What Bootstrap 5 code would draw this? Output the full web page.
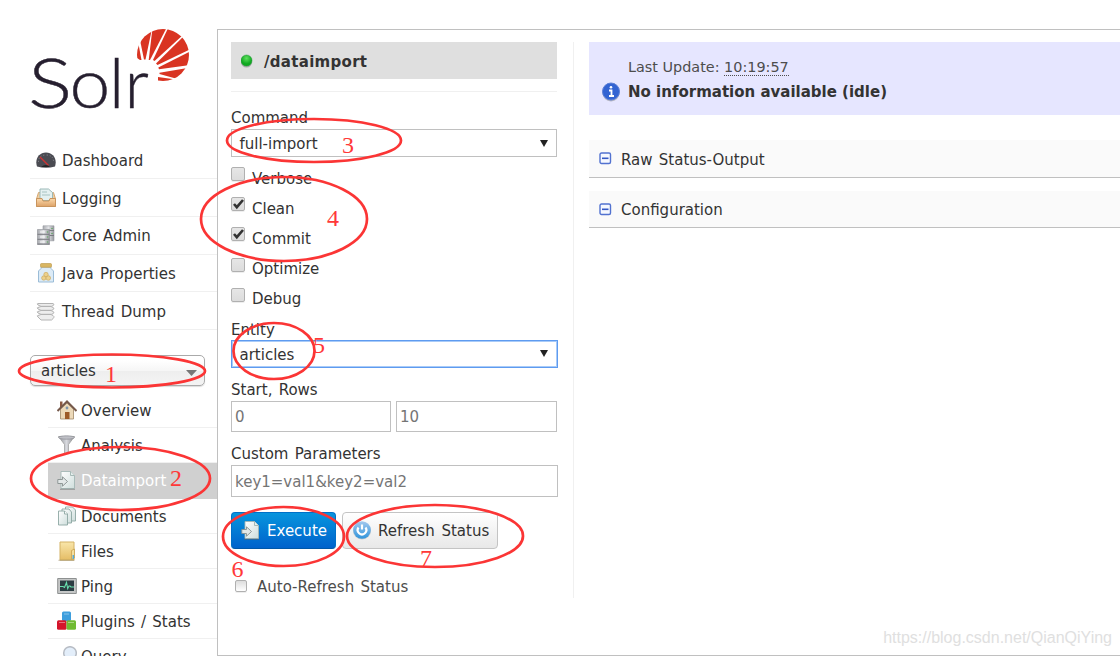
<!DOCTYPE html>
<html lang="en">
<head>
<meta charset="utf-8">
<title>Solr Admin</title>
<link rel="stylesheet" href="https://cdn.jsdelivr.net/npm/bootstrap@5.3.0/dist/css/bootstrap.min.css">
<style>
body{font-family:"DejaVu Sans",sans-serif;font-size:15px;line-height:20px;word-spacing:1.5px;color:#333;width:1120px;height:656px;overflow:hidden;background:#fff}
.side{width:217px;padding-left:30px}
.logo{width:170px;height:112px;margin-top:29px;margin-bottom:.5px;display:block;overflow:visible}
.menu-row{height:37.7px;border-bottom:1px solid #f0f0f0;padding-left:6px;gap:6px}
.menu-row span,.sub-row span,.pick span,.core-pick span,.act span,.fold span,.handler span{padding-top:2px}
.menu-row svg,.sub-row svg{width:20px;height:20px;flex:none}
.core-pick{width:175px;height:31px;margin-top:25px;border:1px solid #aaa;border-radius:5px;padding:0 7px 0 10px;background:linear-gradient(#fff 15%,#f6f6f6 50%,#eee 52%,#f4f4f4 100%);box-shadow:0 1px 1px #ddd}
.subs{margin-left:18px;margin-top:7px}
.sub-row{height:35.2px;border-bottom:1px solid #f0f0f0;padding-left:9px;gap:4px}
.sub-row.current{background:#d0d0d0;color:#fff;border-color:#d0d0d0}
.panel{margin-top:29px;height:627px;border:1px solid #c0c0c0;border-right:0;padding:12px 0 0 13px}
.form-col{width:326px}
.split{width:1px;height:556px;background:#f0f0f0;margin:0 15px 0 16px}
.handler{height:37px;background:#dfdfdf;padding-left:10px;font-size:15px;letter-spacing:.3px}
.line{height:1px;background:#f0f0f0;margin:12px 0 16px}
.lab{height:20px;white-space:nowrap}
.pick{height:28px;border:1px solid #c0c0c0;padding:0 8px 0 7.500px}
.pick.active-pick{border:1px solid #5e9bf0;outline:1px solid #a9cbf8;outline-offset:-2px;margin:0 -1px 0 0;padding-right:9px}
.opt{height:30.2px;gap:7px}
.opt span+span{padding-top:1px}
.box{width:14px;height:14px;flex:none;border:1px solid #b0b0b0;border-radius:2px;background:linear-gradient(#e6e6e6,#dcdcdc);position:relative;top:-4px;box-shadow:0 1px 0 #eee}
.box svg{position:absolute;left:-1px;top:-2px;width:15px;height:15px}
.field{height:31px;border:1px solid #c0c0c0;border-radius:0;padding:2px 3px 0;font-size:15px;color:#757575;outline:0;min-width:0;background:#fff}
.field::placeholder{color:#757575}
.act{height:37px;border-radius:4px;padding:0 9px;font-size:15px;line-height:20px;white-space:nowrap}
.act svg{width:20px;height:20px;flex:none}
.act-go{width:105px;color:#fff;background:linear-gradient(#0795dd,#0062cc);border:1px solid #0070c8;border-bottom-color:#0057a8;gap:6px}
.act-re{width:156px;color:#333;background:linear-gradient(#fff,#e8e8e8);border:1px solid #c4c4c4;gap:6px;word-spacing:2px}
.note{height:73px;background:#e6e6ff;padding:15px 0 0 13px;word-spacing:0}
.note abbr{cursor:default;text-decoration:none;border-bottom:1px dotted #4d4d4d;line-height:15px;display:inline-block}
.fold{height:38px;background:#fafafa;border-bottom:1px solid #c0c0c0;padding-left:10px;gap:9px}
.marks{position:absolute;left:0;top:0;pointer-events:none}
.marks text{font-family:"Liberation Serif",serif;font-size:24px;fill:#ff3838}
.stamp{position:absolute;right:8px;bottom:8px;font:16px/20px "Liberation Sans",sans-serif;color:#e0e0e0;word-spacing:0}
</style>
<script src="https://cdn.jsdelivr.net/npm/bootstrap@5.3.0/dist/js/bootstrap.bundle.min.js"></script>
</head>
<body class="position-relative">
<svg width="0" height="0" class="position-absolute" aria-hidden="true"><defs>
<linearGradient id="paper" x2="1" y2="1"><stop stop-color="#fff"/><stop offset="1" stop-color="#cfdedc"/></linearGradient>
<linearGradient id="metal"><stop stop-color="#8d9096"/><stop offset=".5" stop-color="#d9dadf"/><stop offset="1" stop-color="#85878c"/></linearGradient>
<linearGradient id="rack"><stop stop-color="#a9abb0"/><stop offset=".5" stop-color="#e2e3e6"/><stop offset="1" stop-color="#96989d"/></linearGradient>
<linearGradient id="gold" x2="0" y2="1"><stop stop-color="#f9e6aa"/><stop offset="1" stop-color="#e5bd65"/></linearGradient>
<linearGradient id="tray" x2="0" y2="1"><stop stop-color="#fbd9ac"/><stop offset="1" stop-color="#dda267"/></linearGradient>
<linearGradient id="blue" x2="0" y2="1"><stop stop-color="#a5c9ee"/><stop offset="1" stop-color="#2f94dc"/></linearGradient>
<radialGradient id="green" cy=".3"><stop stop-color="#5fe05f"/><stop offset="1" stop-color="#10a820"/></radialGradient>
<symbol id="i-import" viewBox="0 0 20 20"><path d="M4 1.500h9.500l4 4v13H4z" fill="url(#paper)" stroke="#a3b7b4" stroke-width=".9"/><path d="M13.500 1.500v4h4" fill="#e4eeec" stroke="#9fb3b0" stroke-width=".9"/><path d="M.8 9.500H5.500V6.800l5 4.700-5 4.700v-2.700H.8z" fill="#e3e8e8" stroke="#87908f" stroke-width=".9"/><path d="M3 19.300h15" stroke="#666" opacity=".55"/></symbol>
</defs></svg>
<div class="d-flex">
<aside class="side flex-shrink-0">
<svg class="logo" viewBox="30 29 170 112">
<g font-family="Lato" font-weight="300" font-size="69" fill="#261f2f" stroke="#261f2f" stroke-width=".4">
<text transform="translate(28 108) scale(1.2 1)">S</text><text transform="translate(69.500 108) scale(1.060 1)">o</text><text x="109" y="108">l</text><text x="124.500" y="108">r</text></g>
<clipPath id="sun"><circle cx="163" cy="55" r="26"/></clipPath>
<g clip-path="url(#sun)" fill="#d93422">
<path d="M134 35L138.500 44L141.500 60H140L130 53z"/>
<path d="M139 35L150 26L151.500 31L145.500 59.500H144z"/>
<path d="M153 24H168L166 29L150 60H148.700z"/>
<path d="M170 24L188 30L181.300 36.500L154.500 61L153 60z"/>
<path d="M188 32L196 46L188.700 50L157.500 65L156 63.500z"/>
<path d="M195 49L196 63L186.500 65.500L159 69.300L158.300 67.500z"/>
<path d="M194 67L182 84L175.700 78.500L159.500 74V72.700z"/>
<path d="M174 79.300L172 86L158 84V77z"/></g>
</svg>
<nav>
<div class="menu-row d-flex align-items-center"><svg viewBox="0 0 20 20"><path d="M1 16.500C-1.500 9 3 2.500 10 2.500s11.500 6.500 9 14q-9 2.500-18 0z" fill="#4a4b52"/><path d="M2.500 12q0-7 7.500-7t7.500 7" fill="none" stroke="#8e8e94" stroke-dasharray="1 2"/><path d="M4 7l8.500 8.500" stroke="#c33" stroke-width="1.400"/><path d="M5 17q5-4 9 0z" fill="#222"/></svg><span>Dashboard</span></div>
<div class="menu-row d-flex align-items-center"><svg viewBox="0 0 20 20"><path d="M2.500 4.500h15l2 6.500v7.500H.5V11z" fill="#f1cfa2" stroke="#d2a672"/><path d="M4 1h8.500l4 3.500v8H4z" fill="#e4f1f1" stroke="#9bb9b8"/><path d="M6 4h5M6 7h8" stroke="#a6c3c2"/><path d="M.5 10.500H6l1 2.500h6l1-2.500h5.500v8H.5z" fill="url(#tray)" stroke="#c8945d"/></svg><span>Logging</span></div>
<div class="menu-row d-flex align-items-center"><svg viewBox="0 0 20 20"><path d="M7 .8h11v15H7z" fill="url(#rack)" stroke="#96989d" stroke-width=".6"/><path d="M7 5.500h11M7 10.500h11" stroke="#797b80"/><path d="M1.500 4.500h12v15h-12z" fill="url(#rack)" stroke="#8c8e93" stroke-width=".6"/><path d="M1.500 9.300h12M1.500 14.300h12M1.500 19h12" stroke="#787a80"/><path d="M4 7h5M4 12h5M4 17h5" stroke="#f8f8f9"/><path d="M11.500 6.500v1M11.500 11.500v1M11.500 16.500v1M16 3v1M16 8v1" stroke="#55a856" stroke-width="1.300"/></svg><span>Core Admin</span></div>
<div class="menu-row d-flex align-items-center"><svg viewBox="0 0 20 20"><path d="M5 4h10v1.500l2.500 2.500v11h-15V8L5 5.500z" fill="#dcebf7" stroke="#9bbcd7"/><rect x="4.500" y=".5" width="11" height="3.800" rx="1" fill="#d9b662" stroke="#b99343" stroke-width=".6"/><g fill="#ecd18d" stroke="#c9a555" stroke-width=".6"><circle cx="7.800" cy="15" r="2.200"/><circle cx="12.300" cy="15" r="2.300"/><circle cx="10" cy="11.500" r="2.200"/></g></svg><span>Java Properties</span></div>
<div class="menu-row d-flex align-items-center"><svg viewBox="0 0 20 20"><g fill="#ededed" stroke="#b3b3b3" stroke-width="1"><path d="M2 2.500q-1.500 0 0 1.500l3 1.300h10.500q4-1.500 1.500-2.800z"/><path d="M2 6.500q-1.500 0 0 1.500l3 1.300h10.500q4-1.500 1.500-2.800L15 5.500H5z"/><path d="M2 10.500q-1.500 0 0 1.500l3 1.300h10.500q4-1.500 1.500-2.800l-2-1H5z"/><path d="M2 14.500q-1.500 0 0 1.500l3 3h10.500q4-3 1.500-4.500l-2-1H5z"/></g></svg><span>Thread Dump</span></div>
</nav>
<div class="core-pick d-flex align-items-center justify-content-between"><span>articles</span><svg width="11" height="7" class="mt-1"><path d="M0 1h11L5.500 7z" fill="#777"/></svg></div>
<nav class="subs">
<div class="sub-row d-flex align-items-center"><svg viewBox="0 0 20 20"><path d="M3.500 9L10 3l6.500 6v10h-13z" fill="#ecd9b9" stroke="#a18967" stroke-width=".8"/><path d="M3 1.500h2.500V6L3 8z" fill="#8c5a42"/><path d="M.5 11L10 1.500l9.500 9.500" fill="none" stroke="#75594b" stroke-width="2"/><path d="M8 12h4.500v7H8z" fill="#9c5a28"/><circle cx="10" cy="8" r="1.400" fill="#7e97ad"/></svg><span>Overview</span></div>
<div class="sub-row d-flex align-items-center"><svg viewBox="0 0 20 20"><path d="M1.500 1.500h16l-6 8v7l-4 3v-10z" fill="url(#metal)" stroke="#999" stroke-width=".7"/><ellipse cx="9.500" cy="2.500" rx="8" ry="1.700" fill="#bfc0c6" stroke="#898b92" stroke-width=".7"/></svg><span>Analysis</span></div>
<div class="sub-row current d-flex align-items-center"><svg><use href="#i-import"/></svg><span>Dataimport</span></div>
<div class="sub-row d-flex align-items-center"><svg viewBox="0 0 20 20"><g fill="url(#paper)" stroke="#8da7a3" stroke-width=".9"><path d="M8.500 1h7l3 3v11h-10z"/><path d="M5 3h7l2.500 3v11H5z"/><path d="M1.500 5h6l3 3v11h-9z"/><path d="M7.500 5v3h3" fill="#fff"/></g></svg><span>Documents</span></div>
<div class="sub-row d-flex align-items-center"><svg viewBox="0 0 20 20"><path d="M3 1h14v18H3z" fill="url(#gold)" stroke="#d4b265"/><path d="M1.500 19.300h16" stroke="#98865c" opacity=".6"/><path d="M14.500 18.500V9.500l3-1.500v9z" fill="#f5df9f" stroke="#c7a253" stroke-width=".8"/><path d="M16.300 14v4" stroke="#55abd8" stroke-width="1.500"/></svg><span>Files</span></div>
<div class="sub-row d-flex align-items-center"><svg viewBox="0 0 20 20"><path d="M.7 2.500h18.600v15H.7z" fill="#c5c7c7" stroke="#8e9191"/><path d="M3 4.500h14v10.500H3z" fill="#2c3d43"/><path d="M3 10.500h3l1.500 1 2-5 1.200 6 1.300-2.500h1l1 1h3" fill="none" stroke="#68dfaf" stroke-width="1.100"/></svg><span>Ping</span></div>
<div class="sub-row d-flex align-items-center"><svg viewBox="0 0 20 20"><rect x="5" y=".5" width="9" height="9.500" rx="1.500" fill="#3d9edd"/><rect x="0" y="9.300" width="9.500" height="9.500" rx="1.500" fill="#d4152b"/><rect x="9.500" y="9.300" width="9.500" height="9.500" rx="1.500" fill="#70bb32"/><path d="M7 3h5M2 11.500h6M11 11.500h6" stroke="#fff" opacity=".4"/></svg><span>Plugins / Stats</span></div>
<div class="sub-row d-flex align-items-center"><svg viewBox="0 0 20 20"><circle cx="13" cy="7" r="6.300" fill="#e3eefa" stroke="#b8bdc5" stroke-width="1.500"/><path d="M8 12l-6 6" stroke="#999" stroke-width="3"/></svg><span>Query</span></div>
</nav>
</aside>
<main class="panel flex-grow-1 d-flex align-items-start">
<form class="form-col flex-shrink-0">
<div class="handler d-flex align-items-center fw-bold"><svg width="12" height="14" class="me-2"><ellipse cx="5.500" cy="8" rx="5.600" ry="5.500" fill="#aaa"/><circle cx="5.500" cy="6.500" r="5.500" fill="url(#green)" stroke="#23983a" stroke-width=".5"/></svg><span style="margin-left:3px">/dataimport</span></div>
<div class="line"></div>
<div class="lab">Command</div>
<div class="pick d-flex align-items-center justify-content-between" style="margin-top:1px"><span>full-import</span><svg width="8" height="7"><path d="M0 0h8L4 7z" fill="#222"/></svg></div>
<div class="pt-1 mt-1">
<div class="opt d-flex align-items-center" style="margin-top:-2px"><span class="box"></span><span>Verbose</span></div>
<div class="opt d-flex align-items-center"><span class="box"><svg viewBox="0 0 15 15"><path d="M3 8l2.800 3.200L12 4" fill="none" stroke="#333" stroke-width="2.600"/></svg></span><span>Clean</span></div>
<div class="opt d-flex align-items-center"><span class="box"><svg viewBox="0 0 15 15"><path d="M3 8l2.800 3.200L12 4" fill="none" stroke="#333" stroke-width="2.600"/></svg></span><span>Commit</span></div>
<div class="opt d-flex align-items-center"><span class="box"></span><span>Optimize</span></div>
<div class="opt d-flex align-items-center"><span class="box"></span><span>Debug</span></div>
</div>
<div class="lab" style="margin-top:6px">Entity</div>
<div class="pick active-pick d-flex align-items-center justify-content-between"><span>articles</span><svg width="8" height="7"><path d="M0 0h8L4 7z" fill="#222"/></svg></div>
<div class="lab" style="margin-top:12px">Start, Rows</div>
<div class="d-flex" style="gap:5px;margin-top:1px"><input class="field" style="width:160px" placeholder="0"><input class="field" style="width:161px" placeholder="10"></div>
<div class="lab" style="margin-top:12px">Custom Parameters</div>
<input class="field d-block" style="width:327px;height:32px;margin-top:1px" placeholder="key1=val1&amp;key2=val2">
<div class="d-flex" style="gap:6px;margin-top:15px">
<button type="button" class="act act-go d-flex align-items-center"><svg><use href="#i-import"/></svg><span>Execute</span></button>
<button type="button" class="act act-re d-flex align-items-center"><svg viewBox="0 0 20 20"><ellipse cx="10" cy="11" rx="9" ry="8.500" fill="#999" opacity=".4"/><circle cx="10" cy="10" r="8.800" fill="url(#blue)"/><path d="M6.500 7.500a4.300 4.300 0 1 0 7 0M10 4.500v5" fill="none" stroke="#fff" stroke-width="2.200"/></svg><span>Refresh Status</span></button>
</div>
<div class="d-flex align-items-center" style="margin-top:28px;padding-left:4px;gap:10px;color:#4d4d4d"><span class="box" style="width:12px;height:12px;top:-1px;background:linear-gradient(#ddd,#fff)"></span><span>Auto-Refresh Status</span></div>
</form>
<div class="split flex-shrink-0"></div>
<section class="flex-grow-1">
<div class="note">
<div style="padding-left:26px;color:#4d4d4d;font-size:14.400px">Last Update: <abbr>10:19:57</abbr></div>
<div class="d-flex align-items-center fw-bold" style="gap:8px;margin-top:5px"><svg width="18" height="20" viewBox="0 0 18 20" style="margin-top:-1px"><ellipse cx="9" cy="11" rx="8.500" ry="8.500" fill="#999" opacity=".6"/><circle cx="9" cy="9.500" r="8.500" fill="#3263d2" stroke="#5b7fd6"/><path d="M7 8.500h2.500V14M7 14h5" fill="none" stroke="#fff" stroke-width="1.800"/><circle cx="9" cy="5.300" r="1.300" fill="#fff"/></svg><span>No information available (idle)</span></div>
</div>
<div class="fold d-flex align-items-center" style="margin-top:25px"><svg width="13" height="13" viewBox="0 0 13 13"><rect x="1" y="1" width="10.500" height="10.500" rx="1.500" fill="#f5f8ff" stroke="#5272d0" stroke-width="1.400"/><path d="M3 6.300H9.500" stroke="#3558c4" stroke-width="1.600"/></svg><span>Raw Status-Output</span></div>
<div class="fold d-flex align-items-center" style="margin-top:13px;height:37px"><svg width="13" height="13" viewBox="0 0 13 13"><rect x="1" y="1" width="10.500" height="10.500" rx="1.500" fill="#f5f8ff" stroke="#5272d0" stroke-width="1.400"/><path d="M3 6.300H9.500" stroke="#3558c4" stroke-width="1.600"/></svg><span>Configuration</span></div>
</section>
</main>
</div>
<div class="stamp">https://blog.csdn.net/QianQiYing</div>
<svg class="marks" width="1120" height="656" viewBox="0 0 1120 656">
<g fill="none" stroke="#fb3535" stroke-width="2.700">
<ellipse cx="112" cy="371" rx="93" ry="16.500"/>
<ellipse cx="120.500" cy="478.500" rx="89.500" ry="31.500"/>
<ellipse cx="314" cy="140.500" rx="87" ry="21.500"/>
<ellipse cx="284" cy="219" rx="83" ry="42"/>
<ellipse cx="274" cy="351" rx="40.500" ry="28"/>
<ellipse cx="283.500" cy="536.500" rx="60.500" ry="29.500"/>
<ellipse cx="435" cy="536" rx="88" ry="31"/>
</g>
<text x="105" y="382">1</text><text x="170" y="486">2</text><text x="342" y="153">3</text><text x="327" y="226">4</text><text x="313" y="353">5</text><text x="231.500" y="577">6</text><text x="420" y="566">7</text>
</svg>
</body>
</html>
